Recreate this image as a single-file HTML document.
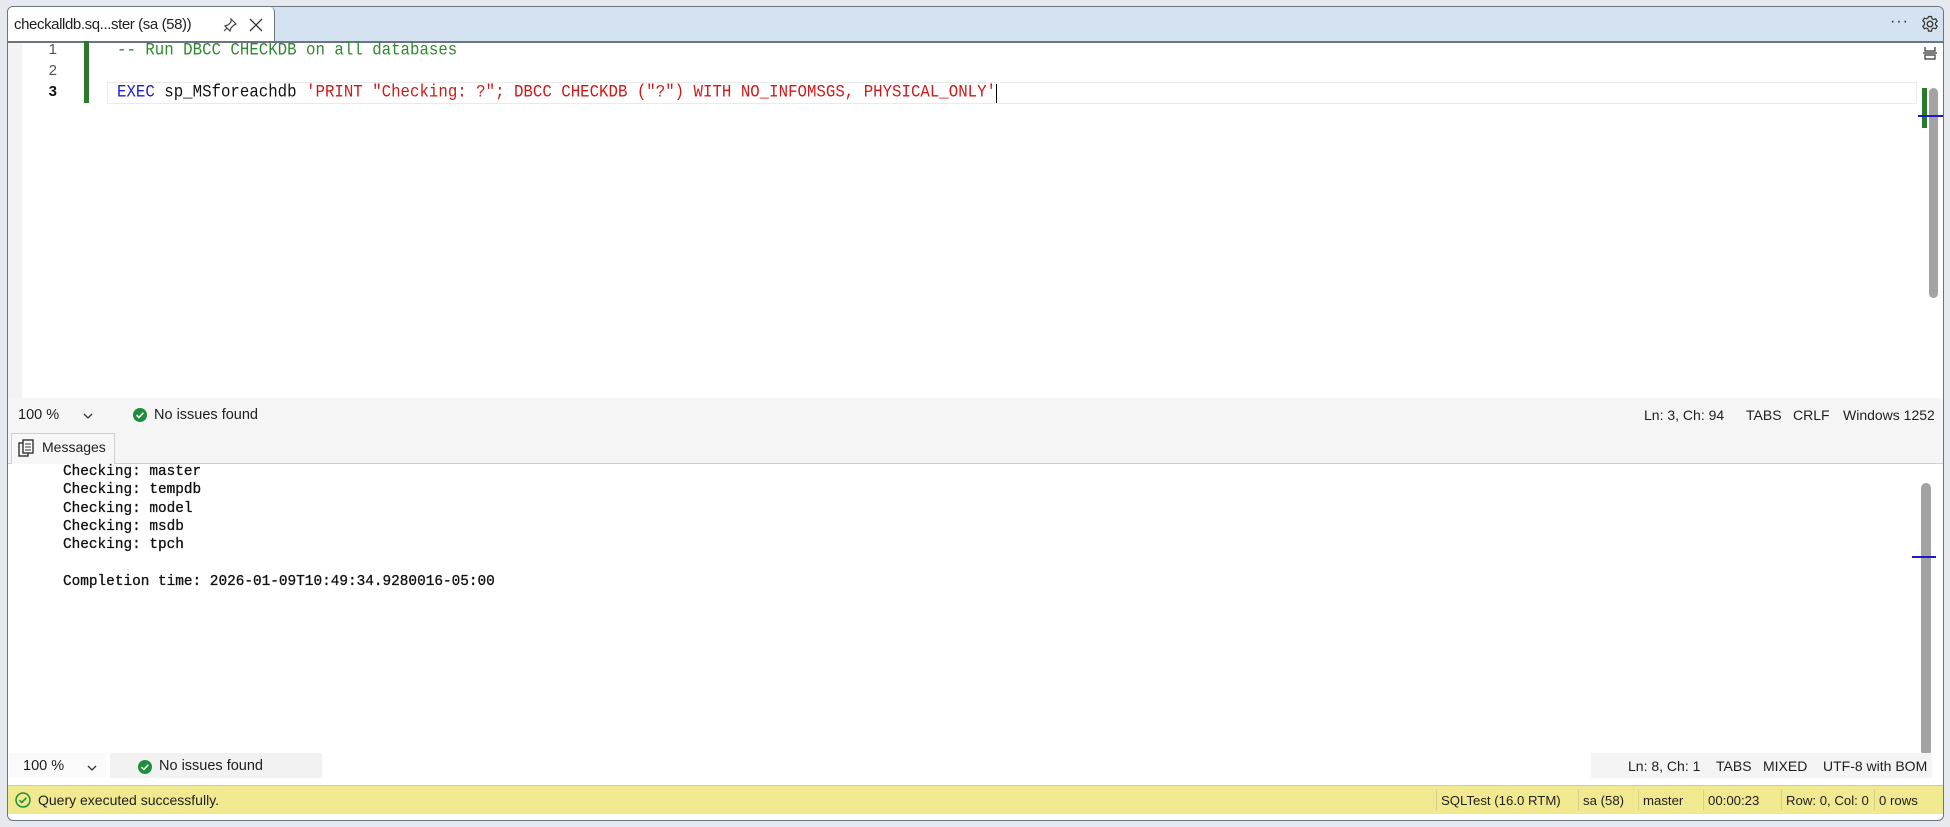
<!DOCTYPE html>
<html><head><style>
*{margin:0;padding:0;box-sizing:border-box}
body{width:1950px;height:827px;background:#e6e9ee;position:relative;overflow:hidden;font-family:"Liberation Sans",sans-serif;font-size:15px;color:#1e1e1e}
.a{position:absolute;white-space:pre}
.win{position:absolute;left:7px;top:6px;width:1937px;height:815px;border:1.5px solid #6b7580;border-radius:6px;background:#fff;overflow:hidden}
.code{font-family:"Liberation Mono",monospace;font-size:15.75px;letter-spacing:0;transform:scaleY(1.12);transform-origin:0 0}
.msg{font-family:"Liberation Mono",monospace;font-size:14.4px;color:#111;letter-spacing:0;-webkit-text-stroke:0.3px #111}
.ln{font-family:"Liberation Sans",sans-serif;font-size:15px;color:#555;text-align:right;width:20px}
</style></head><body>
<div class="win">
  <div class="a" style="left:0;top:0;width:1937px;height:34px;background:#d5e3f1"></div>
  <div class="a" style="left:0;top:0;width:267px;height:35px;background:#fff;border-right:1.5px solid #6b7580;border-top-right-radius:5px"></div>
  <div class="a" style="left:6px;top:9px;font-size:15px;letter-spacing:-0.4px">checkalldb.sq...ster (sa (58))</div>
  <svg class="a" style="left:214px;top:10px" width="16" height="16" viewBox="0 0 16 16"><path d="M9 2l5 5-2 1-3 3-1 3-5-5 3-1 3-3zM5 11l-3 3" fill="none" stroke="#444" stroke-width="1.2"/></svg>
  <svg class="a" style="left:240px;top:10px" width="16" height="16" viewBox="0 0 16 16"><path d="M2 2l12 12M14 2L2 14" stroke="#333" stroke-width="1.3"/></svg>
  <div class="a" style="left:1882px;top:6px;font-size:16px;color:#333;letter-spacing:1px">···</div>
  <svg class="a" style="left:1913px;top:8px" width="18" height="18" viewBox="0 0 18 18"><circle cx="9" cy="9" r="2.8" fill="none" stroke="#333" stroke-width="1.3"/><path d="M7.5 1.5h3l.5 2.2 1.6.9 2.1-.8 1.5 2.6-1.7 1.5v1.8l1.7 1.5-1.5 2.6-2.1-.8-1.6.9-.5 2.2h-3l-.5-2.2-1.6-.9-2.1.8-1.5-2.6 1.7-1.5V7.2L1.8 5.7l1.5-2.6 2.1.8 1.6-.9z" fill="none" stroke="#333" stroke-width="1.2"/></svg>
  <div class="a" style="left:0;top:34px;width:1937px;height:1.5px;background:#6b7580"></div>
  <div class="a" style="left:0;top:36px;width:14px;height:355px;background:#f3f3f3"></div>
  <div class="a ln" style="left:29px;top:34px">1</div>
  <div class="a ln" style="left:29px;top:55px">2</div>
  <div class="a ln" style="left:29px;top:76px;color:#111;font-weight:bold">3</div>
  <div class="a" style="left:76px;top:34px;width:5px;height:62px;background:#2b7a2b"></div>
  <div class="a" style="left:99px;top:75px;width:1810px;height:22px;border:1px solid #eaeaea"></div>
  <div class="a code" style="left:109px;top:33px;color:#2f8a2f">-- Run DBCC CHECKDB on all databases</div>
  <div class="a code" style="left:109px;top:75px;color:#d01818"><span style="color:#1d1dd8">EXEC</span><span style="color:#111"> sp_MSforeachdb </span>'PRINT "Checking: ?"; DBCC CHECKDB ("?") WITH NO_INFOMSGS, PHYSICAL_ONLY'</div>
  <div class="a" style="left:988px;top:77px;width:1px;height:19px;background:#000"></div>
  <svg class="a" style="left:1914px;top:38px" width="16" height="16" viewBox="0 0 16 16"><path d="M3 2v4h10V2M1 8h14M3 14v-4h10v4z" fill="none" stroke="#333" stroke-width="1.2"/></svg>
  <div class="a" style="left:1914px;top:81px;width:5px;height:40px;background:#2b7a2b"></div>
  <div class="a" style="left:1921px;top:81px;width:9px;height:210px;background:#a3a3a3;border-radius:5px"></div>
  <div class="a" style="left:1910px;top:108px;width:27px;height:2px;background:#1a1ad0"></div>
  <div class="a" style="left:0;top:391px;width:1937px;height:32px;background:#f5f5f5"></div>
  <div class="a" style="left:10px;top:400px;font-size:14.5px">100 %</div>
  <svg class="a" style="left:74px;top:404px" width="12" height="10"><path d="M2 3l4 4 4-4" fill="none" stroke="#333" stroke-width="1.3"/></svg>
  <svg class="a" style="left:124px;top:400px" width="16" height="16"><circle cx="8" cy="8" r="7" fill="#1e8e3e"/><path d="M4.5 8.2l2.3 2.3 4.5-4.7" fill="none" stroke="#fff" stroke-width="1.6"/></svg>
  <div class="a" style="left:146px;top:400px;font-size:14.5px">No issues found</div>
  <div class="a" style="left:1636px;top:400px;font-size:14px">Ln: 3, Ch: 94</div>
  <div class="a" style="left:1738px;top:400px;font-size:14px">TABS</div>
  <div class="a" style="left:1785px;top:400px;font-size:14px">CRLF</div>
  <div class="a" style="left:1835px;top:400px;font-size:14px">Windows 1252</div>
  <div class="a" style="left:0;top:423px;width:1937px;height:34px;background:#f5f5f5;border-bottom:1.5px solid #d0d0d0"></div>
  <div class="a" style="left:3px;top:426px;width:104px;height:31px;background:#f7f7f7;border:1px solid #cfcfcf;border-bottom:none"></div>
  <svg class="a" style="left:10px;top:432px" width="16" height="19"><rect x="1" y="4" width="9" height="13" fill="none" stroke="#333" stroke-width="1.4"/><rect x="5" y="1" width="10" height="13" fill="#fff" stroke="#333" stroke-width="1.4"/><path d="M7 5h6M7 8h6M7 11h6" stroke="#333"/></svg>
  <div class="a" style="left:34px;top:432px;font-size:14px">Messages</div>
  <div class="a msg" style="left:55px;top:456px;line-height:18.3px">Checking: master
Checking: tempdb
Checking: model
Checking: msdb
Checking: tpch

Completion time: 2026-01-09T10:49:34.9280016-05:00</div>
  <div class="a" style="left:1913px;top:476px;width:10px;height:273px;background:#a3a3a3;border-radius:5px"></div>
  <div class="a" style="left:1904px;top:549px;width:24px;height:2px;background:#1a1ad0"></div>
  <div class="a" style="left:1px;top:746px;width:97px;height:25px;background:#fafafa"></div>
  <div class="a" style="left:15px;top:751px;font-size:14.5px">100 %</div>
  <svg class="a" style="left:78px;top:756px" width="12" height="10"><path d="M2 3l4 4 4-4" fill="none" stroke="#333" stroke-width="1.3"/></svg>
  <div class="a" style="left:102px;top:746px;width:212px;height:25px;background:#f2f2f2"></div>
  <svg class="a" style="left:129px;top:752px" width="16" height="16"><circle cx="8" cy="8" r="7" fill="#1e8e3e"/><path d="M4.5 8.2l2.3 2.3 4.5-4.7" fill="none" stroke="#fff" stroke-width="1.6"/></svg>
  <div class="a" style="left:151px;top:751px;font-size:14.5px">No issues found</div>
  <div class="a" style="left:1583px;top:746px;width:341px;height:25px;background:#f4f4f4"></div>
  <div class="a" style="left:1620px;top:751px;font-size:14px">Ln: 8, Ch: 1</div>
  <div class="a" style="left:1708px;top:751px;font-size:14px">TABS</div>
  <div class="a" style="left:1755px;top:751px;font-size:14px">MIXED</div>
  <div class="a" style="left:1815px;top:751px;font-size:14px">UTF-8 with BOM</div>
  <div class="a" style="left:0;top:778px;width:1937px;height:1px;background:#c8c8c8"></div>
  <div class="a" style="left:0;top:779px;width:1937px;height:28px;background:#f1e98f"></div>
  <svg class="a" style="left:7px;top:785px" width="16" height="16"><circle cx="8" cy="8" r="7" fill="none" stroke="#1e8e3e" stroke-width="1.5"/><path d="M4.5 8.2l2.3 2.3 4.5-4.7" fill="none" stroke="#1e8e3e" stroke-width="1.6"/></svg>
  <div class="a" style="left:30px;top:785px;font-size:14px">Query executed successfully.</div>
  <div class="a" style="left:1433px;top:786px;font-size:13.2px;color:#222">SQLTest (16.0 RTM)</div>
  <div class="a" style="left:1575px;top:786px;font-size:13.2px">sa (58)</div>
  <div class="a" style="left:1635px;top:786px;font-size:13.2px">master</div>
  <div class="a" style="left:1700px;top:786px;font-size:13.2px">00:00:23</div>
  <div class="a" style="left:1778px;top:786px;font-size:13.2px">Row: 0, Col: 0</div>
  <div class="a" style="left:1871px;top:786px;font-size:13.2px">0 rows</div>
  <div class="a" style="left:1428px;top:783px;width:1px;height:20px;background:#d8d08a"></div>
  <div class="a" style="left:1570px;top:783px;width:1px;height:20px;background:#d8d08a"></div>
  <div class="a" style="left:1630px;top:783px;width:1px;height:20px;background:#d8d08a"></div>
  <div class="a" style="left:1695px;top:783px;width:1px;height:20px;background:#d8d08a"></div>
  <div class="a" style="left:1773px;top:783px;width:1px;height:20px;background:#d8d08a"></div>
  <div class="a" style="left:1866px;top:783px;width:1px;height:20px;background:#d8d08a"></div>
</div>
</body></html>
